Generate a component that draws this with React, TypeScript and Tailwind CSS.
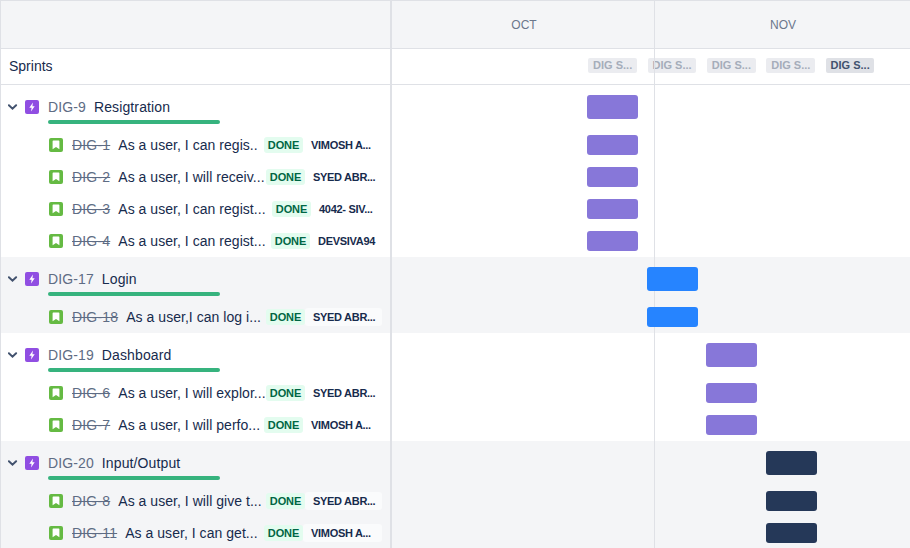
const font = { fontFamily: '"Liberation Sans", Arial, sans-serif' };

type Who = { name: string; width: string };
type Story = { id: string; text: string; who: Who };
type Epic = { id: string; name: string; color: string; offset: string; stories: Story[] };

const vimosh: Who = { name: "VIMOSH A...", width: "w-[79px]" };
const syed: Who = { name: "SYED ABR...", width: "w-[77px]" };
const siva: Who = { name: "4042- SIV...", width: "w-[71px]" };
const dev: Who = { name: "DEVSIVA94", width: "w-[72px]" };

const epics: Epic[] = [
  {
    id: "DIG-9", name: "Resigtration", color: "bg-[#8777d9]", offset: "ml-[195px]",
    stories: [
      { id: "DIG-1", text: "As a user, I can regis..", who: vimosh },
      { id: "DIG-2", text: "As a user, I will receiv...", who: syed },
      { id: "DIG-3", text: "As a user, I can regist...", who: siva },
      { id: "DIG-4", text: "As a user, I can regist...", who: dev },
    ],
  },
  {
    id: "DIG-17", name: "Login", color: "bg-[#2684ff]", offset: "ml-[255px]",
    stories: [{ id: "DIG-18", text: "As a user,I can log i...", who: syed }],
  },
  {
    id: "DIG-19", name: "Dashboard", color: "bg-[#8777d9]", offset: "ml-[314px]",
    stories: [
      { id: "DIG-6", text: "As a user, I will explor...", who: syed },
      { id: "DIG-7", text: "As a user, I will perfo...", who: vimosh },
    ],
  },
  {
    id: "DIG-20", name: "Input/Output", color: "bg-[#253858]", offset: "ml-[374px]",
    stories: [
      { id: "DIG-8", text: "As a user, I will give t...", who: syed },
      { id: "DIG-11", text: "As a user, I can get...", who: vimosh },
    ],
  },
];

function EpicIcon() {
  return (
    <svg width="14" height="14" viewBox="0 0 14 14" className="shrink-0">
      <rect width="14" height="14" rx="2" fill="#904ee2" />
      <path d="M8 2.6 4.3 7.8h2.3L6 11.4l3.7-5.2H7.4z" fill="#fff" />
    </svg>
  );
}

function StoryIcon() {
  return (
    <svg width="14" height="14" viewBox="0 0 14 14" className="shrink-0">
      <rect width="14" height="14" rx="2" fill="#65ba43" />
      <path d="M3.6 3.2a.7.7 0 0 1 .7-.7h5.4a.7.7 0 0 1 .7.7v8L7 8.9l-3.4 2.3z" fill="#fff" />
    </svg>
  );
}

function Chevron() {
  return (
    <svg width="10" height="7" viewBox="0 0 10 7" className="shrink-0">
      <path d="M.9 1.3 4.5 4.7l3.6-3.4" fill="none" stroke="#42526e" strokeWidth="2" strokeLinecap="round" />
    </svg>
  );
}

function EpicRow({ e }: { e: Epic }) {
  return (
    <div className="flex h-[44px]">
      <div className="w-[391px] shrink-0 border-r-2 border-[#dfe1e6] pl-[7px] flex">
        <div className="mt-[19px]"><Chevron /></div>
        <div className="ml-[7px] mt-[15px]"><EpicIcon /></div>
        <div className="ml-[9px] w-[172px]">
          <div className="flex h-[20px] items-center mt-[12px] text-[14px] leading-[20px] whitespace-nowrap tracking-[0.12px]">
            <span className="text-[#5e6c84]">{e.id}</span>
            <span className="ml-[8px] text-[#172b4d]">{e.name}</span>
          </div>
          <div className="h-[4px] mt-[2.5px] rounded-full bg-[#36b37e]" />
        </div>
      </div>
      <div className="flex-1 pt-[10px]">
        <div className={`relative z-10 ${e.offset} w-[51px] h-[24px] rounded-[3px] ${e.color}`} />
      </div>
    </div>
  );
}

function StoryRow({ s, e, shaded }: { s: Story; e: Epic; shaded: boolean }) {
  return (
    <div className="flex h-[32px]">
      <div className="w-[391px] shrink-0 border-r-2 border-[#dfe1e6] pl-[48px] pr-[8px] flex items-center">
        <StoryIcon />
        <span className="ml-[9px] text-[14px] text-[#5e6c84] line-through shrink-0 tracking-[0.18px]">{s.id}</span>
        <span className="ml-[8px] text-[14px] text-[#172b4d] whitespace-nowrap flex-1 min-w-0 tracking-[0.04px]">{s.text}</span>
        <span className="shrink-0 w-[39px] h-[16px] text-center rounded-[3px] bg-[#e3fcef] text-[#006644] text-[11px] leading-[16px] font-bold tracking-[-0.1px]">DONE</span>
        <span className={`shrink-0 ${s.who.width} h-[18px] pl-[8px] rounded-[3px] text-[#172b4d] text-[11px] leading-[18px] font-bold tracking-[-0.3px] whitespace-nowrap ${shaded ? "bg-[#fafbfc]" : ""}`}>
          {s.who.name}
        </span>
      </div>
      <div className="flex-1 pt-[6px]">
        <div className={`relative z-10 ${e.offset} w-[51px] h-[20px] rounded-[3px] ${e.color}`} />
      </div>
    </div>
  );
}

export default function App() {
  const chips = [0, 1, 2, 3, 4];
  return (
    <div style={font} className="relative w-[910px] h-[548px] overflow-hidden bg-white border-l border-t border-[#dfe1e6]">
      <div className="flex h-[48px] bg-[#f4f5f7] border-b border-[#dfe1e6]">
        <div className="w-[391px] shrink-0 border-r-2 border-[#dfe1e6]" />
        <div className="w-[263px] shrink-0 pl-[2px] flex items-center justify-center text-[12px] text-[#6b778c] border-r border-[#dfe1e6]">OCT</div>
        <div className="flex-1 pl-[1px] flex items-center justify-center text-[12px] text-[#6b778c]">NOV</div>
      </div>
      <div className="flex h-[36px] border-b border-[#dfe1e6]">
        <div className="w-[391px] shrink-0 border-r-2 border-[#dfe1e6] pl-[8px] flex items-center text-[14px] text-[#172b4d]">Sprints</div>
        <div className="flex-1 pl-[196.3px] pt-[9px] flex gap-[10.7px]">
          {chips.map((c) => (
            <span key={c} className={`w-[48.7px] h-[15px] rounded-[2px] text-center text-[11px] leading-[15px] font-bold whitespace-nowrap ${c === 4 ? "bg-[#dfe1e6] text-[#42526e]" : "bg-[#ebecf0] text-[#a5adba]"}`}>DIG S...</span>
          ))}
        </div>
      </div>
      {epics.map((e, i) => {
        const shaded = i % 2 === 1;
        return (
          <div key={e.id} className={shaded ? "bg-[#f4f5f7]" : "bg-white"}>
            <EpicRow e={e} />
            {e.stories.map((s) => (
              <StoryRow key={s.id} s={s} e={e} shaded={shaded} />
            ))}
          </div>
        );
      })}
      <div className="absolute left-[653px] top-0 bottom-0 w-px bg-[#dfe1e6]" />
    </div>
  );
}
